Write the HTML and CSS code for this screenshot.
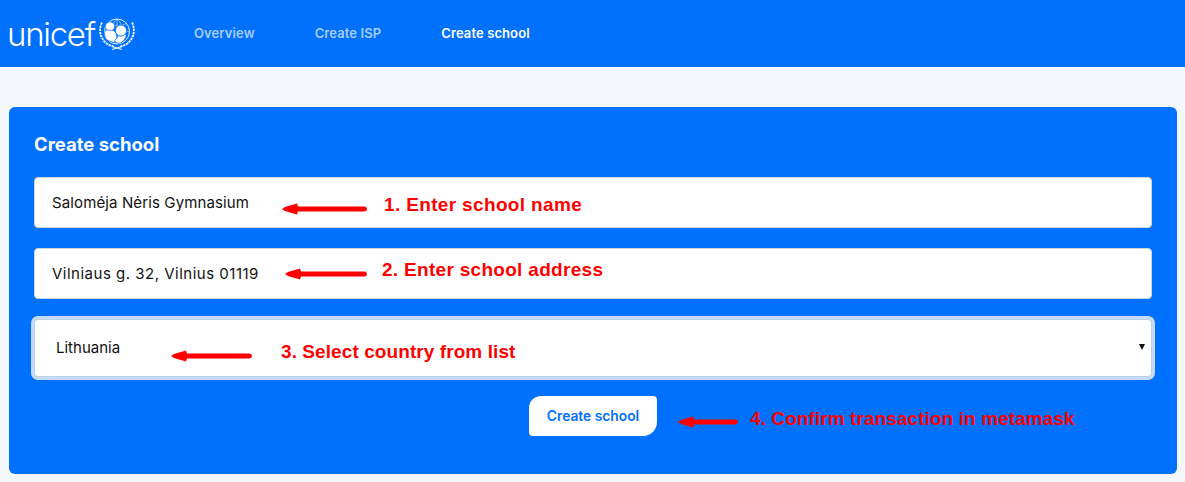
FILE: index.html
```html
<!DOCTYPE html>
<html lang="en">
<head>
<meta charset="utf-8">
<title>Create school</title>
<link rel="stylesheet" href="styles.css">
</head>
<body>
<header class="topbar">
  <a class="logo" href="#">
    <span class="logo-word">unicef</span>
    <svg class="logo-mark" width="36" height="32" viewBox="0 0 36 32" aria-hidden="true">
      <g fill="none" stroke="#fff">
        <circle cx="18" cy="13.500" r="12.500" stroke-width=".9"/>
        <path d="M5.500 13.500H30.500M18 1V26M8.500 5.500C13 8 23 8 27.500 5.500M18 1C11 5 11 22 18 26M18 1C25 5 25 22 18 26" stroke-width=".5"/>
        <path d="M3 4.500C-.5 11 .5 21 9 26.500L15.500 29M33 4.500C36.500 11 35.500 21 27 26.500L20.500 29" stroke-width="1.800" stroke-dasharray="2.400 .8"/>
        <path d="M13 28.500 23 31.500M23 28.500 13 31.500" stroke-width="1"/>
      </g>
      <g fill="#fff">
        <circle cx="11" cy="8.500" r="4.600" stroke="#0070ff" stroke-width=".6"/>
        <path d="M6.500 12C5 15.500 5.500 19.500 8 22L15 24.500 18 21.500 17 15 14.500 12.500z" stroke="#0070ff" stroke-width=".6"/>
        <path d="M19 17C19 19 18 21 15.500 22.500L17.500 25H20.500C24 24.500 26.500 21 27.500 16.500L23 16z" stroke="#0070ff" stroke-width=".8"/>
        <circle cx="22" cy="12.500" r="5.600" stroke="#0070ff" stroke-width=".9"/>
      </g>
    </svg>
  </a>
  <nav class="menu">
    <a class="menu-link" href="#">Overview</a>
    <a class="menu-link" href="#">Create ISP</a>
    <a class="menu-link is-active" href="#">Create school</a>
  </nav>
</header>

<main class="page">
  <section class="card">
    <h1 class="card-title">Create school</h1>
    <form class="form">
      <input class="field field-name" type="text" value="Saloméja Nėris Gymnasium">
      <input class="field field-address" type="text" value="Vilniaus g. 32, Vilnius 01119">
      <div class="select-wrap">
        <select class="field field-select">
          <option>Lithuania</option>
        </select>
      </div>
      <div class="actions">
        <button class="submit" type="button">Create school</button>
      </div>
    </form>

    <div class="note note-1">
      <svg class="arrow" width="85" height="14" viewBox="0 0 85 14"><path d="M0 7 3 5 8 3.500 15 1.500 16 4.500H82.500a2.500 2.500 0 0 1 0 5H16L15 12.500 8 10.500 3 9z"/></svg>
      <span class="note-text">1. Enter school name</span>
    </div>
    <div class="note note-2">
      <svg class="arrow" width="82" height="14" viewBox="0 0 82 14"><path d="M0 7 3 5 8 3.500 15 1.500 16 4.500H79.500a2.500 2.500 0 0 1 0 5H16L15 12.500 8 10.500 3 9z"/></svg>
      <span class="note-text">2. Enter school address</span>
    </div>
    <div class="note note-3">
      <svg class="arrow" width="81" height="14" viewBox="0 0 81 14"><path d="M0 7 3 5 8 3.500 15 1.500 16 4.500H78.500a2.500 2.500 0 0 1 0 5H16L15 12.500 8 10.500 3 9z"/></svg>
      <span class="note-text">3. Select country from list</span>
    </div>
    <div class="note note-4">
      <svg class="arrow" width="60" height="14" viewBox="0 0 60 14"><path d="M0 7 3 5 8 3.500 15 1.500 16 4.500H57.500a2.500 2.500 0 0 1 0 5H16L15 12.500 8 10.500 3 9z"/></svg>
      <span class="note-text">4. Confirm transaction in metamask</span>
    </div>
  </section>
</main>
</body>
</html>
```

FILE: styles.css
```css
* { box-sizing: border-box; }

html, body {
  margin: 0;
  height: 100%;
}

body {
  background: #f3f6fb;
  font-family: Inter, "Liberation Sans", sans-serif;
  overflow: hidden;
}

.topbar {
  display: flex;
  align-items: center;
  height: 67px;
  background: #0070ff;
}

.logo {
  display: flex;
  align-items: center;
  width: 194px;
  padding-left: 7px;
  color: #fff;
  text-decoration: none;
}

.logo-word {
  font-family: Inter, "Liberation Sans", sans-serif;
  font-size: 33px;
  font-weight: 300;
  line-height: 34px;
  letter-spacing: -1.300px;
}

.logo-mark {
  margin-left: 4px;
}

.menu {
  display: flex;
  gap: 60px;
  margin-bottom: 2px;
}

.menu-link {
  color: rgba(255, 255, 255, .66);
  font-size: 13px;
  font-weight: 600;
  letter-spacing: .1px;
  text-decoration: none;
}

.menu-link.is-active {
  color: #fff;
}

.page {
  padding: 40px 8px 0 9px;
}

.card {
  position: relative;
  height: 367px;
  padding: 25px 25px 0;
  background: #0070ff;
  border-radius: 6px;
}

.card-title {
  margin: 0 0 21px;
  color: #fff;
  font-size: 18.500px;
  font-weight: 700;
  line-height: 24px;
}

.form {
  display: flex;
  flex-direction: column;
  gap: 20px;
}

.field {
  display: block;
  width: 100%;
  height: 51px;
  padding: 0 17px;
  border: 1px solid #ced4da;
  border-radius: 4px;
  background: #fff;
  color: #111;
  font-family: Inter, "Liberation Sans", sans-serif;
  font-size: 15px;
  outline: none;
}

.field-name { letter-spacing: .12px; }
.field-address { letter-spacing: .5px; }

.select-wrap {
  position: relative;
}

.select-wrap::after {
  content: "";
  position: absolute;
  top: 25px;
  right: 7px;
  border-left: 3px solid transparent;
  border-right: 3px solid transparent;
  border-top: 6px solid #111;
}

.field-select {
  height: 58px;
  padding: 0 21px 2px;
  appearance: none;
  border-color: #bccfe8;
  box-shadow: 0 0 0 3px #c6dafa;
}

.actions {
  display: flex;
  justify-content: center;
  margin-top: -1px;
}

.submit {
  width: 128px;
  height: 40px;
  padding: 0;
  border: 0;
  border-radius: 12px 4px 14px 4px;
  background: #fff;
  color: #0070ff;
  font-family: Inter, "Liberation Sans", sans-serif;
  font-size: 13.800px;
  font-weight: 600;
}

.note {
  position: absolute;
  display: flex;
  align-items: center;
  color: #f00;
  font-family: "Liberation Sans", sans-serif;
  font-size: 19px;
  line-height: 22px;
  font-weight: 700;
  white-space: nowrap;
}

.arrow {
  flex: none;
  margin-top: 8px;
  fill: #f00;
}

.note-1 { left: 273px; top: 87px; gap: 17px; letter-spacing: .35px; }
.note-2 { left: 276px; top: 152px; gap: 15px; letter-spacing: .3px; }
.note-3 { left: 162px; top: 234px; gap: 29px; letter-spacing: .08px; }
.note-4 { left: 669px; top: 301px; gap: 12px; letter-spacing: .08px; }
.note-4 .arrow { margin-top: 6px; }
```
